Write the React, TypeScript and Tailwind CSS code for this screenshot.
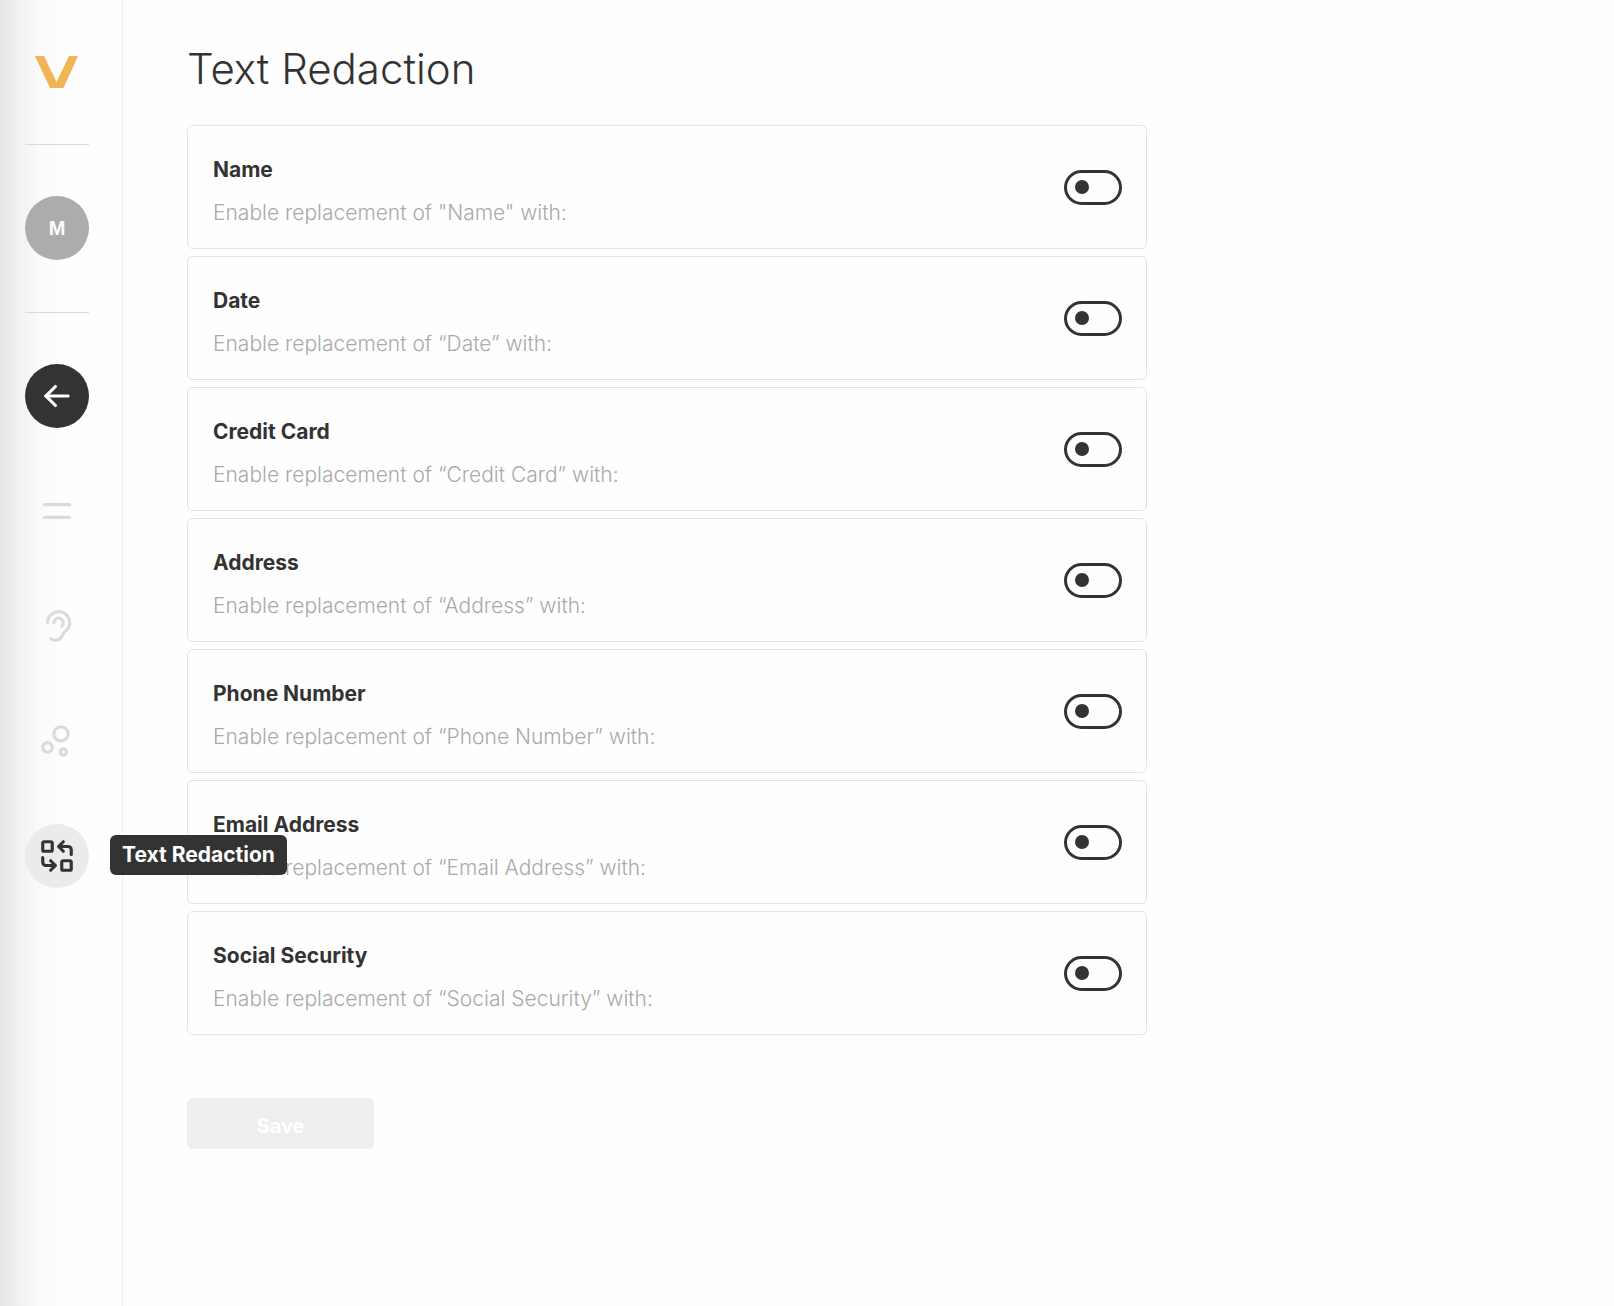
import React, { useState } from 'react';
import { TbArrowLeft, TbChartBubble, TbEar, TbMenu, TbReplace } from 'react-icons/tb';

const redactions = [
  { id: "name", title: "Name", text: 'Enable replacement of "Name" with:' },
  { id: "date", title: "Date", text: "Enable replacement of “Date” with:" },
  { id: "credit-card", title: "Credit Card", text: "Enable replacement of “Credit Card” with:" },
  { id: "address", title: "Address", text: "Enable replacement of “Address” with:" },
  { id: "phone", title: "Phone Number", text: "Enable replacement of “Phone Number” with:" },
  { id: "email", title: "Email Address", text: "Enable replacement of “Email Address” with:" },
  { id: "social", title: "Social Security", text: "Enable replacement of “Social Security” with:" },
];

const links = [
  { label: "Menu", Icon: TbMenu },
  { label: "Listen", Icon: TbEar },
  { label: "Topics", Icon: TbChartBubble },
];

const Sidebar = () => {
  return (
    <aside className="flex w-[123px] shrink-0 flex-col border-r border-[#eeeeee] bg-[linear-gradient(to_right,#e5e5e5,#f2f2f2_20px,#fafafa_40px,#fefefe_64px)] pl-[25px]">
      <div className="flex h-[145px] w-16 border-b border-[#d9d9d9] pt-14 pl-[10px]">
        <svg viewBox="0 0 43 32" className="h-8 w-[43px] shrink-0" role="img" aria-label="Logo">
          <path d="M0 0H9L21.5 26L34 0H43L28.5 32H15Z" fill="#f3b454" />
        </svg>
      </div>
      <div className="flex h-[168px] w-16 justify-center border-b border-[#d9d9d9] pt-[51px]">
        <button aria-label="Account" className="h-16 w-16 rounded-full bg-[#acacac] font-['Liberation_Sans',sans-serif] text-xl font-bold text-white">
          M
        </button>
      </div>
      <nav className="flex flex-col gap-[51px] pt-[51px]">
        <a href="#back" aria-label="Back" className="flex h-16 w-16 items-center justify-center rounded-full bg-[#333333] text-white">
          <TbArrowLeft size={38} />
        </a>
        {links.map(({ label, Icon }) => (
          <a key={label} href="#" aria-label={label} className="flex h-16 w-16 items-center justify-center rounded-full text-[#dbdbdb]">
            <Icon size={38} />
          </a>
        ))}
        <a href="#redaction" className="relative flex h-16 w-16 items-center justify-center rounded-full bg-[#ebebeb] text-[#333333]">
          <TbReplace size={38} />
          {/* tooltip */}
          <span className="absolute top-[11px] left-[85px] z-10 flex h-10 w-[177px] items-center justify-center rounded-md bg-[#333333] text-[21px] font-bold whitespace-nowrap text-white">
            Text Redaction
          </span>
        </a>
      </nav>
    </aside>
  );
};

const App = () => {
  const [enabled, setEnabled] = useState<string[]>([]);

  const toggle = (id: string) => {
    setEnabled(prev => (prev.includes(id) ? prev.filter(item => item !== id) : [...prev, id]));
  };

  return (
    <div className="flex min-h-screen bg-[#fefefe] font-[Inter,sans-serif] text-[#333333]">
      <Sidebar />
      <main className="min-w-0 flex-1 px-16 pt-[45px] pb-16">
        <h1 className="text-[42px] leading-[48px] font-light">Text Redaction</h1>
        <div className="mt-8 flex max-w-[960px] flex-col gap-[7px]">
          {redactions.map(item => (
            <label
              key={item.id}
              htmlFor={item.id}
              className="flex h-[124px] items-center justify-between rounded-md border border-[#e2e2e2] pr-6 pl-[25px]"
            >
              <span className="flex flex-col gap-[15px] pt-2">
                <span className="text-[21px] leading-7 font-bold">{item.title}</span>
                <span className="text-[21px] leading-7 font-light text-[#aaaaaa]">{item.text}</span>
              </span>
              <input
                id={item.id}
                type="checkbox"
                checked={enabled.includes(item.id)}
                onChange={() => toggle(item.id)}
                className="flex h-[35px] w-[58px] shrink-0 appearance-none items-center rounded-full border-3 border-[#333333] px-2 before:h-3.5 before:w-3.5 before:rounded-full before:bg-[#333333] checked:justify-end"
              />
            </label>
          ))}
        </div>
        <button
          disabled={enabled.length === 0}
          className="mt-[63px] h-[51px] w-[187px] rounded-md bg-[#333333] pt-1 text-[20px] font-bold text-white disabled:bg-[#eeeeee]"
        >
          Save
        </button>
      </main>
    </div>
  );
};
export default App;
